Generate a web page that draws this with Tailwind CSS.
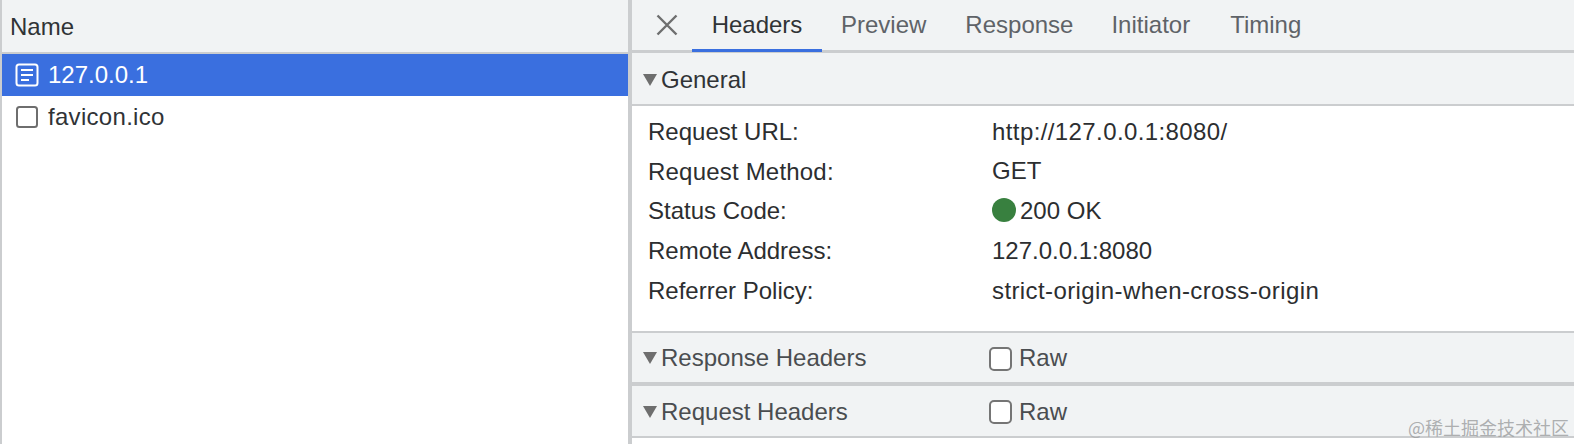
<!DOCTYPE html>
<html><head><meta charset="utf-8"><script src="https://cdn.jsdelivr.net/npm/@tailwindcss/browser@4"></script></head>
<body class="m-0 bg-white overflow-hidden">
<div class="relative flex w-[1574px] h-[444px] overflow-hidden bg-white text-[24px] text-[#303336] font-['Liberation_Sans',sans-serif]">
  <div class="w-[2px] bg-[#cbcdcf]"></div>
  <div class="w-[626px] flex flex-col">
    <div class="h-[54px] bg-[#f1f3f4] border-b-2 border-[#cbcdcf] flex items-center pl-[8px] pt-[2px]">Name</div>
    <div class="h-[42px] bg-[#3a6fdf] text-white flex items-center pl-[13px]">
      <svg class="w-[24px] h-[24px]" viewBox="0 0 24 24" fill="none" stroke="#fff"><rect x="1.5" y="1.5" width="21" height="21" rx="2.5" stroke-width="2"/><path d="M6 7h12M6 12h12M6 17h8" stroke-width="2"/></svg>
      <span class="ml-[9px]">127.0.0.1</span>
    </div>
    <div class="h-[42px] flex items-center pl-[13px]">
      <svg class="w-[24px] h-[24px]" viewBox="0 0 24 24" fill="none" stroke="#6e6e6e"><rect x="2" y="2" width="20" height="20" rx="2.5" stroke-width="2"/></svg>
      <span class="ml-[9px] tracking-[0.3px]">favicon.ico</span>
    </div>
  </div>
  <div class="w-[4px] bg-[#cbcdcf]"></div>
  <div class="flex-1 flex flex-col">
    <div class="h-[53px] bg-[#f1f3f4] border-b-[3px] border-[#cbcdcf] flex items-start">
      <svg class="w-[22px] h-[22px] ml-[24px] mt-[14px]" viewBox="0 0 22 22" fill="none" stroke="#6e6e6e" stroke-width="2.4"><path d="M1.5 1.5l19 19M20.5 1.5l-19 19"/></svg>
      <div class="ml-[14px] flex text-[#5f6368]">
        <div class="w-[130px] h-[52px] border-b-[3px] border-[#3a6fdf] text-[#303336] text-center pt-[7px]">Headers</div>
        <div class="ml-[19px] pt-[7px]">Preview</div>
        <div class="ml-[39px] pt-[7px]">Response</div>
        <div class="ml-[38px] pt-[7px]">Initiator</div>
        <div class="ml-[40px] pt-[7px]">Timing</div>
      </div>
    </div>
    <div class="h-[53px] bg-[#f1f3f4] border-b-2 border-[#cbcdcf] flex items-center pl-[11px] pt-[2px]">
      <span class="w-0 h-0 border-x-[7px] border-x-transparent border-t-[12px] border-t-[#6e6e6e] mr-[4px]"></span>General
    </div>
    <div class="h-[225px] pt-[6px] pl-[16px]">
      <div class="grid grid-cols-[344px_1fr] auto-rows-[39.75px] items-center text-[#2c2e30]">
        <div>Request URL:</div><div class="tracking-[0.4px]">http://127.0.0.1:8080/</div>
        <div class="tracking-[0.2px]">Request Method:</div><div class="-mt-[1px]">GET</div>
        <div>Status Code:</div><div class="flex items-center"><span class="w-[24px] h-[24px] rounded-full bg-[#38803f] mr-[4px] -mt-[2px]"></span>200 OK</div>
        <div>Remote Address:</div><div>127.0.0.1:8080</div>
        <div>Referrer Policy:</div><div class="tracking-[0.4px]">strict-origin-when-cross-origin</div>
      </div>
    </div>
    <div class="h-[55px] bg-[#f1f3f4] border-y-2 border-[#cbcdcf] border-b-4 flex items-center pl-[11px] text-[#4a4d50]">
      <span class="w-0 h-0 border-x-[7px] border-x-transparent border-t-[12px] border-t-[#6e6e6e] mr-[4px]"></span>
      <span class="w-[328px]">Response Headers</span>
      <span class="w-[23px] h-[24px] rounded-[5px] border-2 border-[#757575] bg-white mt-[3px] mr-[7px]"></span>Raw
    </div>
    <div class="h-[52px] bg-[#f1f3f4] border-b-2 border-[#cbcdcf] flex items-center pl-[11px] pt-[1px] text-[#4a4d50]">
      <span class="w-0 h-0 border-x-[7px] border-x-transparent border-t-[12px] border-t-[#6e6e6e] mr-[4px]"></span>
      <span class="w-[328px]">Request Headers</span>
      <span class="w-[23px] h-[24px] rounded-[5px] border-2 border-[#757575] bg-white mt-[1px] mr-[7px]"></span>Raw
    </div>
  </div>
  <div class="absolute right-[5px] bottom-[3px] text-[18px] text-[#9a9c9e]/80 font-['Noto_Sans_CJK_SC',sans-serif]">@稀土掘金技术社区</div>
</div>
</body></html>
